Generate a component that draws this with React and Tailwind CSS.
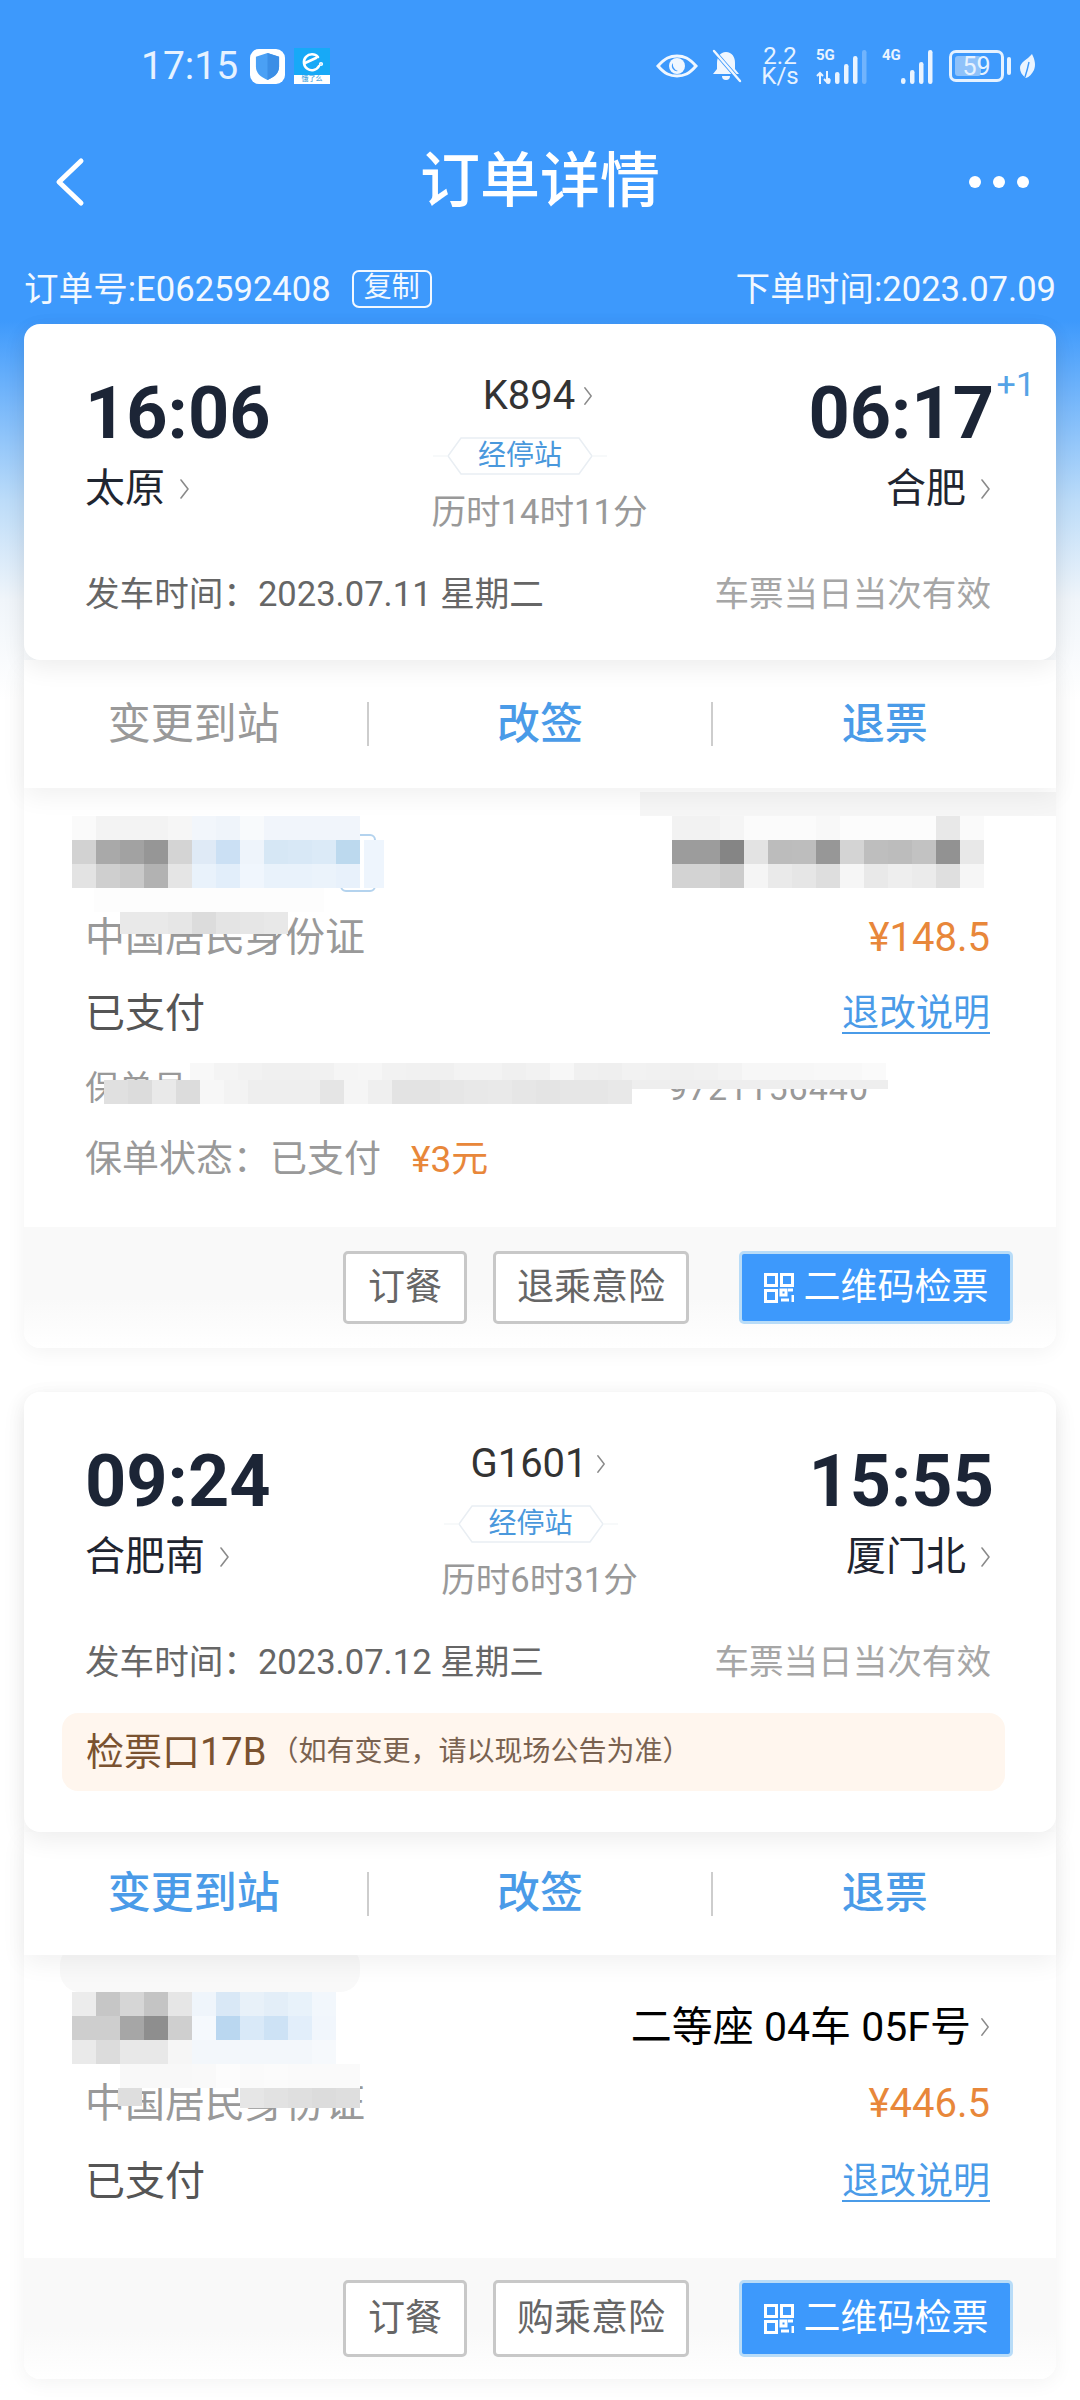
const Chevron = ({ className = 'w-[11px] h-[22px]', color = '#8a8a8a' }) => (
  <svg viewBox="0 0 11 22" className={className} fill="none" stroke={color} strokeWidth="1.6" strokeLinecap="round" strokeLinejoin="round">
    <path d="M2 2l7 9-7 9" />
  </svg>
);

const Bars = ({ heights, dim }) => (
  <svg width={heights.length * 9} height="34" viewBox={`0 0 ${heights.length * 9} 34`} fill="#eaf4ff">
    {heights.map((h, i) => (
      <rect key={i} x={i * 9 + 1} y={34 - h} width="4.5" height={h} rx="2.2" opacity={dim === i ? 0.3 : 1} />
    ))}
  </svg>
);

const StatusBar = () => (
  <div className="flex items-center justify-between h-[44px] mt-[44px] pl-[141px] pr-[43px] text-[#e6f2ff]">
    <div className="flex items-center">
      <span className="text-[39px] leading-none w-[109px]">17:15</span>
      <div className="w-[35px] h-[35px] rounded-[9px] bg-white flex items-center justify-center">
        <svg viewBox="0 0 28 30" className="w-[27px] h-[29px]">
          <path d="M14 1l12 4v10c0 7-5 11-12 14C7 26 2 22 2 15V5z" fill="#4aa0f5" />
          <path d="M14 1l12 4v10c0 7-5 11-12 14z" fill="#3b8ee6" />
        </svg>
      </div>
      <div className="w-[36px] h-[36px] ml-[9px] bg-[#17a9f7] flex flex-col justify-between">
        <svg viewBox="0 0 36 26" className="w-[36px] h-[26px]" fill="none" stroke="#fff" strokeWidth="2.6" strokeLinecap="round">
          <path d="M24 9a8 8 0 1 0 1 9" />
          <path d="M11 15l11-5" />
          <circle cx="27" cy="16" r="0.8" />
        </svg>
        <div className="h-[9px] bg-white text-[7px] leading-[9px] text-center text-[#1790d8]">饿了么</div>
      </div>
    </div>
    <div className="flex items-center">
      <svg viewBox="0 0 42 24" className="w-[42px] h-[24px]">
        <path d="M2 12C9 4 14 2 21 2s12 2 19 10c-7 8-12 10-19 10S9 20 2 12z" fill="none" stroke="#f0f7ff" strokeWidth="3" />
        <circle cx="21" cy="12" r="8" fill="#f0f7ff" />
        <path d="M17 9a5 5 0 0 0 5 8 7 7 0 0 1-5-8z" fill="#3d99fc" />
      </svg>
      <svg viewBox="0 0 32 34" className="w-[32px] h-[34px] ml-[12px]">
        <path d="M16 3c6 0 9 5 9 11v6l4 5H3l4-5v-6c0-6 3-11 9-11z" fill="#f0f7ff" />
        <path d="M12 27h8a4 4 0 0 1-8 0z" fill="#f0f7ff" />
        <path d="M3 1l27 31" stroke="#3d99fc" strokeWidth="4" />
        <path d="M4 2l26 30" stroke="#f0f7ff" strokeWidth="2.4" strokeLinecap="round" />
      </svg>
      <div className="ml-[20px] w-[36px] flex flex-col items-center text-[24px] leading-[20px]">
        <span>2.2</span>
        <span>K/s</span>
      </div>
      <div className="ml-[18px] relative w-[54px] h-[36px]">
        <span className="absolute left-0 top-0 text-[15px] leading-none font-bold text-[#eaf4ff]">5G</span>
        <svg viewBox="0 0 17 13" className="absolute left-0 bottom-0 w-[17px] h-[13px]" fill="none" stroke="#eaf4ff" strokeWidth="2">
          <path d="M4 13V2M1 5l3-3 3 3M11 0v11M8 8l3 3 3-3" />
        </svg>
        <div className="absolute right-0 bottom-0">
          <Bars heights={[6, 12, 20, 28, 34]} dim={4} />
        </div>
      </div>
      <div className="ml-[12px] relative w-[54px] h-[36px]">
        <span className="absolute left-0 top-0 text-[15px] leading-none font-bold text-[#eaf4ff]">4G</span>
        <div className="absolute right-0 bottom-0">
          <Bars heights={[6, 14, 22, 34]} />
        </div>
      </div>
      <div className="ml-[13px] relative w-[55px] h-[32px] rounded-[7px] border-[3px] border-[#e6f2ff] flex items-center justify-center">
        <div className="absolute left-[3px] top-[3px] bottom-[3px] w-[26px] rounded-[3px] bg-[#8fc2fa]" />
        <span className="relative text-[25px] leading-none text-[#e6f2ff]">59</span>
      </div>
      <div className="ml-[3px] w-[4px] h-[18px] rounded-full bg-[#e6f2ff]" />
      <svg viewBox="0 0 18 26" className="ml-[8px] w-[18px] h-[26px]">
        <path d="M13 1c3 6 4 11 2 16-2 4-5 7-8 8-4-3-6-6-6-10C1 9 8 7 13 1z" fill="#eaf4ff" />
        <path d="M10 9c-1 5-2 9-4 15" stroke="#3d99fc" strokeWidth="1.4" fill="none" />
      </svg>
    </div>
  </div>
);

const Header = () => (
  <div className="text-white">
    <StatusBar />
    <div className="grid grid-cols-[1fr_auto_1fr] items-center h-[60px] mt-[64px] px-[48px]">
      <svg viewBox="0 0 34 50" className="w-[34px] h-[50px] ml-[4px]" fill="none" stroke="#fff" strokeWidth="5" strokeLinecap="round" strokeLinejoin="round">
        <path d="M29 4L7 25l22 21" />
      </svg>
      <h1 className="text-[60px] leading-none font-medium">订单详情</h1>
      <div className="flex justify-end gap-[12px] pr-[3px]">
        <span className="w-[12px] h-[12px] rounded-full bg-white" />
        <span className="w-[12px] h-[12px] rounded-full bg-white" />
        <span className="w-[12px] h-[12px] rounded-full bg-white" />
      </div>
    </div>
    <div className="flex items-center justify-between h-[40px] mt-[57px] px-[24px] text-[34.6px] leading-none text-[#f2f8ff]">
      <div className="flex items-center">
        <span>订单号:E062592408</span>
        <span className="ml-[21px] w-[80px] h-[38px] rounded-[7px] border-2 border-[#f2f8ff] text-[28px] leading-[32px] text-center">复制</span>
      </div>
      <span>下单时间:2023.07.09</span>
    </div>
  </div>
);

const StopTag = ({ className }) => (
  <div className={`relative w-[174px] h-[38px] flex items-center justify-center ${className}`}>
    <svg viewBox="0 0 174 38" className="absolute inset-0 w-[174px] h-[38px]" fill="none" strokeWidth="1.5">
      <path d="M28 1h118l13 18-13 18H28L15 19z" stroke="#e9eef3" />
      <path d="M0 19h15M159 19h15" stroke="#f5f7f9" />
    </svg>
    <span className="relative text-[28px] leading-none text-[#4a98dc]">经停站</span>
  </div>
);

const TrainHead = ({ from, to, dep, arr, train, span, date, tagClass, plusOne, children }) => (
  <div className="relative z-20 bg-white rounded-[16px] shadow-[0_8px_24px_rgba(0,0,0,0.07)] pt-[54px] pl-[61px] pr-[65px]">
    <div className="grid grid-cols-[1fr_auto_1fr] h-[174px]">
      <div>
        <div className="text-[72px] leading-[72px] font-bold text-[#1c2536]">{dep}</div>
        <div className="flex items-center mt-[17px] gap-[14px] text-[40px] leading-[44px] text-[#1f2530]">
          {from}
          <Chevron />
        </div>
      </div>
      <div className="flex flex-col items-center -mt-[4px]">
        <div className="flex items-center gap-[8px] text-[40px] leading-[44px] text-[#333]">
          {train}
          <Chevron className="w-[10px] h-[20px]" />
        </div>
        <StopTag className={`mt-[19px] ${tagClass}`} />
        <div className="mt-[17px] ml-[3px] text-[34.6px] leading-[40px] text-[#999]">{span}</div>
      </div>
      <div className="relative flex flex-col items-end">
        <div className="-mr-[3px] text-[72px] leading-[72px] font-bold text-[#1c2536]">{arr}</div>
        {plusOne && <span className="absolute -right-[44px] -top-[11px] text-[34px] leading-none text-[#55a3e6]">+1</span>}
        <div className="flex items-center mt-[17px] gap-[14px] text-[40px] leading-[44px] text-[#1f2530]">
          {to}
          <Chevron />
        </div>
      </div>
    </div>
    <div className="flex items-center justify-between h-[40px] mt-[22px] text-[34.6px] leading-none">
      <span className="text-[#666]">发车时间：{date}</span>
      <span className="text-[#a6a6a6]">车票当日当次有效</span>
    </div>
    {children}
  </div>
);

const Actions = ({ change, height }) => (
  <div className={`relative z-10 bg-white shadow-[0_8px_24px_rgba(0,0,0,0.06)] grid grid-cols-[1fr_2px_1fr_2px_1fr] items-center text-[43px] leading-none font-medium text-[#4a9be8] ${height}`}>
    <span className={`text-center pr-[3px] ${change ? '' : 'text-[#999] font-normal'}`}>变更到站</span>
    <span className="h-[44px] bg-[#cdcdcd]" />
    <span className="text-center">改签</span>
    <span className="h-[44px] bg-[#cdcdcd]" />
    <span className="text-center">退票</span>
  </div>
);

// pixelated privacy smudge laid over the names in the screenshot
const Mosaic = ({ rows, className, cell = 24, cellH = 24 }) => (
  <div className={`absolute z-[5] ${className}`}>
    {rows.map((row, i) => (
      <div key={i} className="flex">
        {row.map((c, j) => (
          <span key={j} style={{ background: c, width: cell, height: cellH }} />
        ))}
      </div>
    ))}
  </div>
);

const g = (...hex) => hex.map((h) => `#${h}`);

const ActionBtn = ({ height, children }) => (
  <button className={`whitespace-nowrap border-[3px] border-[#c8c8c8] rounded-[5px] bg-white text-[37px] leading-none text-[#666] ${height}`}>
    {children}
  </button>
);

const Footer = ({ insurance, btnHeight }) => (
  <div className="h-[121px] rounded-b-[16px] bg-[linear-gradient(#f9f9f9,#f9f9f9_60%,#fff)] flex items-center justify-end pr-[43px]">
    <ActionBtn height={`w-[124px] ${btnHeight}`}>订餐</ActionBtn>
    <ActionBtn height={`w-[196px] ml-[26px] ${btnHeight}`}>{insurance}</ActionBtn>
    <button className={`w-[274px] ml-[50px] border-[3px] border-[#b8dcf8] rounded-[5px] bg-[#3d99fc] flex items-center justify-center gap-[10px] text-[37px] leading-none text-white ${btnHeight}`}>
      <svg viewBox="0 0 30 30" className="w-[30px] h-[30px]" fill="none" stroke="#fff" strokeWidth="3">
        <rect x="1.5" y="1.5" width="11" height="11" />
        <rect x="17.5" y="1.5" width="11" height="11" />
        <rect x="1.5" y="17.5" width="11" height="11" />
        <path d="M17 17h5v5h-5zM24 17h5M29 22v7M17 27h8" />
      </svg>
      二维码检票
    </button>
  </div>
);

const Row = ({ className, left, right }) => (
  <div className={`flex items-center justify-between ${className}`}>
    {left}
    {right}
  </div>
);

const Id = () => <span className="text-[40px] leading-none text-[#999]">中国居民身份证</span>;
const Paid = () => <span className="text-[40px] leading-none text-[#555]">已支付</span>;
const Rule = () => <span className="text-[37px] leading-[40px] text-[#4a9be8] underline underline-offset-[6px] decoration-2">退改说明</span>;
const Price = ({ value }) => <span className="text-[40px] leading-none text-[#e8873a]">{value}</span>;

const FirstPassenger = () => (
  <div className="relative bg-white h-[439px] pl-[61px] pr-[66px] pt-[112px]">
    <Row className="h-[76px]" left={<Id />} right={<Price value="¥148.5" />} />
    <Row className="h-[76px]" left={<Paid />} right={<Rule />} />
    <div className="flex items-center justify-between w-[784px] h-[72px] text-[34px] leading-none text-[#999]">
      <span>保单号：</span>
      <span className="tracking-[1px]">9721156440</span>
    </div>
    <div className="flex items-center h-[70px] text-[37px] leading-none text-[#999]">
      <span>保单状态：已支付</span>
      <span className="ml-[30px] text-[#e8873a]">¥3元</span>
    </div>
    <div className="absolute left-[316px] top-[46px] w-[36px] h-[58px] rounded-[6px] border-2 border-[#b4d3ee]" />
    <div className="absolute z-[4] left-[340px] top-[52px] w-[20px] h-[48px] bg-[#eef5fd]" />
    <div className="absolute z-[4] left-[616px] right-0 top-[4px] h-[24px] bg-[#f6f6f6]" />
    <div className="absolute z-[4] left-[70px] top-[100px] w-[230px] h-[24px] bg-[#fdfdfd]" />
    <Mosaic
      className="left-[48px] top-[28px]"
      rows={[
        g('fafafa', 'f3f3f3', 'f3f3f3', 'f3f3f3', 'f6f6f6', 'f2f6fb', 'eff4fa', 'f8fafc', 'f1f5fb', 'f1f5fb', 'f1f5fb', 'f1f5fb'),
        g('d2d2d2', 'a9a9a9', 'a2a2a2', '969696', 'd4d4d4', 'dfeaf6', 'cbe0f4', 'eef4fb', 'd6e7f5', 'd8e8f6', 'dbeaf7', 'bcd9ee'),
        g('e3e3e3', 'cfcfcf', 'c9c9c9', 'b2b2b2', 'e5e5e5', 'e9f2fb', 'e2eefa', 'f0f6fd', 'e9f2fb', 'e9f2fb', 'ebf3fb', 'e8f1fb'),
      ]}
    />
    <Mosaic
      className="left-[96px] top-[124px]"
      rows={[g('e9e9e9', 'e9e9e9', 'e6e6e6', 'dcdcdc', 'e4e4e4', 'e6e6e6', 'e8e8e8')]}
      cellH={22}
    />
    <Mosaic
      className="left-[648px] top-[28px]"
      rows={[
        g('f2f2f2', 'f2f2f2', 'f5f5f5', 'fbfbfb', 'fbfbfb', 'fbfbfb', 'f8f8f8', 'fcfcfc', 'fcfcfc', 'fcfcfc', 'fcfcfc', 'e8e8e8', 'fafafa'),
        g('9c9c9c', '9c9c9c', '858585', 'e3e3e3', 'bcbcbc', 'bdbdbd', '979797', 'd4d4d4', 'bebebe', 'bcbcbc', 'c2c2c2', '929292', 'e8e8e8'),
        g('d3d3d3', 'd3d3d3', 'cccccc', 'f5f5f5', 'eaeaea', 'e6e6e6', 'dedede', 'f6f6f6', 'e9e9e9', 'eeeeee', 'ebebeb', 'dfdfdf', 'f6f6f6'),
      ]}
    />
    <Mosaic
      className="left-[166px] top-[275px]"
      rows={[
        g('f8f8f8', 'f4f4f4', 'f2f2f2', 'f0f0f0', 'f0f0f0', 'f1f1f1', 'f5f5f5', 'f6f6f6', 'f2f2f2', 'f1f1f1', 'f0f0f0', 'f3f3f3', 'f3f3f3', 'f0f0f0', 'f2f2f2', 'f7f7f7', 'f0f0f0', 'efefef', 'f2f2f2', 'f1f1f1', 'f0f0f0', 'f1f1f1', 'f3f3f3', 'f7f7f7', 'f7f7f7', 'f7f7f7', 'f8f8f8', 'f8f8f8', 'fafafa'),
      ]}
      cellH={17}
    />
    <Mosaic
      className="left-[80px] top-[292px]"
      rows={[
        g('e0e0e0', 'dcdcdc', 'e9e9e9', 'dcdcdc', 'f7f7f7', 'f3f3f3', 'eeeeee', 'eeeeee', 'eeeeee', 'e5e5e5', 'f5f5f5', 'efefef', 'e3e3e3', 'e3e3e3', 'e6e6e6', 'e8e8e8', 'e9e9e9', 'e6e6e6', 'e4e4e4', 'e6e6e6', 'e6e6e6', 'e8e8e8'),
      ]}
    />
    <div className="absolute z-[5] left-[608px] top-[292px] w-[256px] h-[9px] bg-[#eeeeee]" />
  </div>
);

const SecondPassenger = () => (
  <div className="relative bg-white h-[303px] pl-[61px] pr-[66px] pt-[34px]">
    <Row
      className="h-[76px] justify-end"
      right={
        <div className="flex items-center gap-[9px] text-[41px] leading-none text-black">
          二等座 04车 05F号
          <Chevron className="w-[10px] h-[20px]" />
        </div>
      }
    />
    <Row className="h-[78px]" left={<Id />} right={<Price value="¥446.5" />} />
    <Row className="h-[78px]" left={<Paid />} right={<Rule />} />
    <div className="absolute z-[4] left-[36px] -top-[10px] w-[300px] h-[47px] rounded-[20px] bg-[#f9f9f9]" />
    <Mosaic
      className="left-[48px] top-[37px]"
      rows={[
        g('ececec', 'c6c6c6', 'd6d6d6', 'c4c4c4', 'e6e6e6', 'eff5fb', 'd9e8f6', 'e8f1f9', 'e3eef8', 'e8f2fa', 'f2f7fc'),
        g('cecece', 'cecece', 'a6a6a6', '8e8e8e', 'cfcfcf', 'f5f9fd', 'bad7f0', 'd9e9f8', 'cde2f5', 'e2eefa', 'f1f6fc'),
        g('eaeaea', 'dcdcdc', 'e8e8e8', 'e8e8e8', 'f6f6f6', 'f3f7fb', 'f3f7fb', 'f3f7fb', 'f3f7fb', 'f3f7fb', 'f6f9fc'),
      ]}
    />
    <Mosaic
      className="left-[96px] top-[109px]"
      rows={[g('f8f8f8', 'f8f8f8', 'f8f8f8', 'f9f9f9', 'fcfcfc', 'fafafa', 'fbfbfb', 'fafafa', 'fafafa', 'fafafa')]}
    />
    <Mosaic className="left-[94px] top-[133px]" rows={[g('dedede')]} cellH={18} />
    <Mosaic
      className="left-[216px] top-[133px]"
      rows={[g('e6e6e6', 'e2e2e2', 'dfdfdf', 'dcdcdc', 'dedede')]}
      cellH={20}
    />
  </div>
);

export default function App() {
  return (
    <div className="w-[1080px] h-[2400px] overflow-hidden bg-[linear-gradient(#3d99fc,#3d99fc_320px,#bcdcf9_500px,#f0f5fa_600px,#fff_700px)] [font-family:Roboto,'Noto_Sans_CJK_SC',sans-serif]">
      <Header />
      <div className="mx-[24px] mt-[15px] rounded-[16px] shadow-[0_4px_20px_rgba(0,0,0,0.05)]">
        <TrainHead
          from="太原"
          to="合肥"
          dep="16:06"
          arr="06:17"
          train="K894"
          span="历时14时11分"
          date="2023.07.11 星期二"
          tagClass="mr-[36px]"
          plusOne
        >
          <div className="h-[46px]" />
        </TrainHead>
        <Actions height="h-[128px]" />
        <FirstPassenger />
        <Footer insurance="退乘意险" btnHeight="h-[73px]" />
      </div>
      <div className="mx-[24px] mt-[44px] rounded-[16px] shadow-[0_4px_20px_rgba(0,0,0,0.05)]">
        <TrainHead
          from="合肥南"
          to="厦门北"
          dep="09:24"
          arr="15:55"
          train="G1601"
          span="历时6时31分"
          date="2023.07.12 星期三"
          tagClass="mr-[15px]"
        >
          <div className="flex items-center h-[78px] mt-[31px] -ml-[23px] -mr-[14px] pl-[24px] rounded-[16px] bg-[#fff6ee] text-[#7a5230]">
            <span className="text-[38px] leading-none">检票口17B</span>
            <span className="ml-[4px] text-[28px] leading-none text-[#7a6250]">（如有变更，请以现场公告为准）</span>
          </div>
          <div className="h-[41px]" />
        </TrainHead>
        <Actions change height="h-[123px]" />
        <SecondPassenger />
        <Footer insurance="购乘意险" btnHeight="h-[77px]" />
      </div>
    </div>
  );
}
